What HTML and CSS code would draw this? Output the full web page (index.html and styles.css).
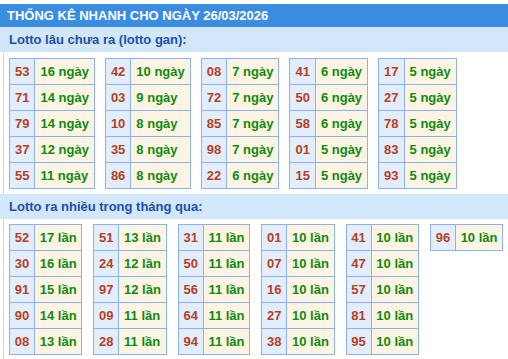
FILE: index.html
```html
<!DOCTYPE html>
<html>
<head>
<meta charset="utf-8">
<link rel="stylesheet" href="styles.css">
</head>
<body>
<div class="box">
  <div class="title">THỐNG KÊ NHANH CHO NGÀY 26/03/2026</div>
  <div class="band">Lotto lâu chưa ra (lotto gan):</div>
  <div class="grid">
    <table class="lt"><tr><td class="n">53</td><td class="v">16 ngày</td></tr><tr><td class="n">71</td><td class="v">14 ngày</td></tr><tr><td class="n">79</td><td class="v">14 ngày</td></tr><tr><td class="n">37</td><td class="v">12 ngày</td></tr><tr><td class="n">55</td><td class="v">11 ngày</td></tr></table>
    <table class="lt"><tr><td class="n">42</td><td class="v">10 ngày</td></tr><tr><td class="n">03</td><td class="v">9 ngày</td></tr><tr><td class="n">10</td><td class="v">8 ngày</td></tr><tr><td class="n">35</td><td class="v">8 ngày</td></tr><tr><td class="n">86</td><td class="v">8 ngày</td></tr></table>
    <table class="lt"><tr><td class="n">08</td><td class="v">7 ngày</td></tr><tr><td class="n">72</td><td class="v">7 ngày</td></tr><tr><td class="n">85</td><td class="v">7 ngày</td></tr><tr><td class="n">98</td><td class="v">7 ngày</td></tr><tr><td class="n">22</td><td class="v">6 ngày</td></tr></table>
    <table class="lt"><tr><td class="n">41</td><td class="v">6 ngày</td></tr><tr><td class="n">50</td><td class="v">6 ngày</td></tr><tr><td class="n">58</td><td class="v">6 ngày</td></tr><tr><td class="n">01</td><td class="v">5 ngày</td></tr><tr><td class="n">15</td><td class="v">5 ngày</td></tr></table>
    <table class="lt"><tr><td class="n">17</td><td class="v">5 ngày</td></tr><tr><td class="n">27</td><td class="v">5 ngày</td></tr><tr><td class="n">78</td><td class="v">5 ngày</td></tr><tr><td class="n">83</td><td class="v">5 ngày</td></tr><tr><td class="n">93</td><td class="v">5 ngày</td></tr></table>
  </div>
  <div class="band">Lotto ra nhiều trong tháng qua:</div>
  <div class="grid grid2">
    <table class="lt"><tr><td class="n">52</td><td class="v">17 lần</td></tr><tr><td class="n">30</td><td class="v">16 lần</td></tr><tr><td class="n">91</td><td class="v">15 lần</td></tr><tr><td class="n">90</td><td class="v">14 lần</td></tr><tr><td class="n">08</td><td class="v">13 lần</td></tr></table>
    <table class="lt"><tr><td class="n">51</td><td class="v">13 lần</td></tr><tr><td class="n">24</td><td class="v">12 lần</td></tr><tr><td class="n">97</td><td class="v">12 lần</td></tr><tr><td class="n">09</td><td class="v">11 lần</td></tr><tr><td class="n">28</td><td class="v">11 lần</td></tr></table>
    <table class="lt"><tr><td class="n">31</td><td class="v">11 lần</td></tr><tr><td class="n">50</td><td class="v">11 lần</td></tr><tr><td class="n">56</td><td class="v">11 lần</td></tr><tr><td class="n">64</td><td class="v">11 lần</td></tr><tr><td class="n">94</td><td class="v">11 lần</td></tr></table>
    <table class="lt"><tr><td class="n">01</td><td class="v">10 lần</td></tr><tr><td class="n">07</td><td class="v">10 lần</td></tr><tr><td class="n">16</td><td class="v">10 lần</td></tr><tr><td class="n">27</td><td class="v">10 lần</td></tr><tr><td class="n">38</td><td class="v">10 lần</td></tr></table>
    <table class="lt"><tr><td class="n">41</td><td class="v">10 lần</td></tr><tr><td class="n">47</td><td class="v">10 lần</td></tr><tr><td class="n">57</td><td class="v">10 lần</td></tr><tr><td class="n">81</td><td class="v">10 lần</td></tr><tr><td class="n">95</td><td class="v">10 lần</td></tr></table>
    <table class="lt"><tr><td class="n">96</td><td class="v">10 lần</td></tr></table>
  </div>
</div>
</body>
</html>
```
FILE: styles.css
```css
html, body {
  margin: 0;
  padding: 0;
  background: #ffffff;
}
body {
  padding-top: 4px;
  font-family: "Liberation Sans", Arial, sans-serif;
  font-size: 13px;
  font-weight: bold;
  line-height: 15px;
}
.box {
  width: 508px;
}
.title {
  background: #3a8de0;
  color: #ffffff;
  padding: 4px 7px;
  white-space: nowrap;
}
.band {
  background: #d3e7fb;
  color: #1c4fae;
  padding: 5px 9px 5px 9px;
  height: 15px;
  line-height: 16px;
}
.grid {
  margin-left: 3px;
  border-left: 1px solid #d4d4d4;
  padding: 6px 0 5px 5px;
  display: flex;
  align-items: flex-start;
  gap: 10px;
}
.grid2 {
  padding-top: 5px;
  gap: 11px;
}
.lt {
  border-collapse: separate;
  border-spacing: 0;
  border-top: 1px solid #8cb0f0;
  border-left: 1px solid #8cb0f0;
}
.lt td {
  border-right: 1px solid #8cb0f0;
  border-bottom: 1px solid #8cb0f0;
  padding: 5px 5px;
  height: 15px;
  white-space: nowrap;
}
.grid2 .lt td {
  padding-left: 4.75px;
  padding-right: 4.75px;
}
.lt td.n {
  background: #e2eefd;
  color: #b63f1f;
  text-align: center;
}
.lt td.v {
  background: #fdf4e3;
  color: #0f8a0f;
}
```
